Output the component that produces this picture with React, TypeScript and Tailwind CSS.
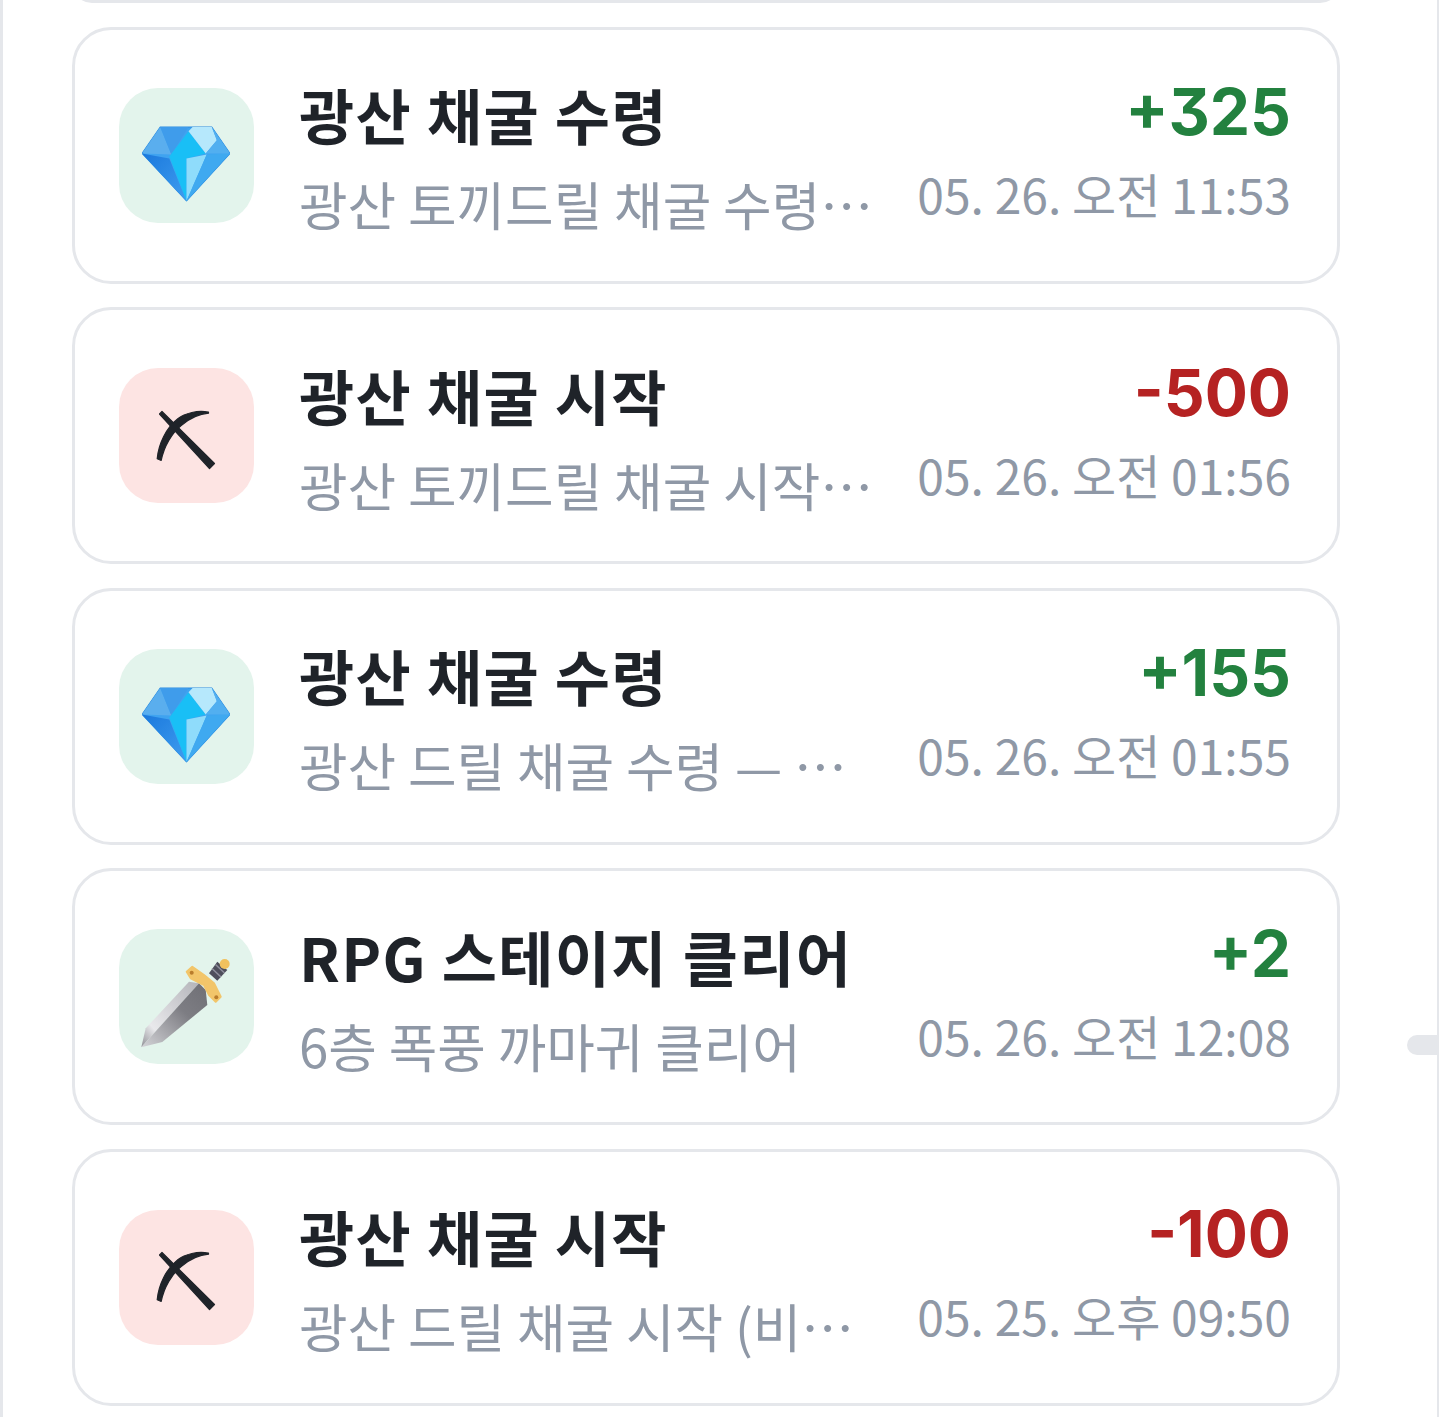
const KR = "font-['Noto_Sans_CJK_KR',sans-serif]";

interface Row {
    title: string;
    sub: string;
    amount: string;
    time: string;
    icon: 'gem' | 'pick' | 'dagger';
}

const rows: Row[] = [
    { title: '광산 채굴 수령', sub: '광산 토끼드릴 채굴 수령 — 비용 500', amount: '+325', time: '05. 26. 오전 11:53', icon: 'gem' },
    { title: '광산 채굴 시작', sub: '광산 토끼드릴 채굴 시작 (비용 500)', amount: '-500', time: '05. 26. 오전 01:56', icon: 'pick' },
    { title: '광산 채굴 수령', sub: '광산 드릴 채굴 수령 — 비용 100 다이아', amount: '+155', time: '05. 26. 오전 01:55', icon: 'gem' },
    { title: 'RPG 스테이지 클리어', sub: '6층 폭풍 까마귀 클리어', amount: '+2', time: '05. 26. 오전 12:08', icon: 'dagger' },
    { title: '광산 채굴 시작', sub: '광산 드릴 채굴 시작 (비용 100 다이아)', amount: '-100', time: '05. 25. 오후 09:50', icon: 'pick' },
];

function Gem({ id }: { id: string }) {
    return (
        <svg viewBox="0 0 87 75" className="w-[88px] h-[76px] mt-[17px] mr-[2px]">
            <defs>
                <linearGradient id={id} x1="0" y1="0" x2="1" y2="1">
                    <stop offset="0" stopColor="#1a78dc" />
                    <stop offset="1" stopColor="#3f9df0" />
                </linearGradient>
            </defs>
            <path d="M18 1H69L87 27L44 74L0 27Z" fill="#3fa3f0" stroke="#2a8ae0" strokeWidth="1" strokeLinejoin="round" />
            <path d="M18 1L29 28L0 27Z" fill="#5aaeee" />
            <path d="M18 1H46L29 28Z" fill="#3f9ceb" />
            <path d="M0 27L27 32L44 74Z" fill={`url(#${id})`} />
            <path d="M46 5L63 27L44 32V74L27 30Z" fill="#19bff6" />
            <path d="M44 32L64 28L44 74Z" fill="#8fdcfb" />
            <path d="M64 28L87 27L44 74Z" fill="#3fa9f0" />
            <path d="M46 5L50 1H69L74 14L63 27Z" fill="#b6e8fc" />
            <path d="M69 1L87 27L63 27L74 14Z" fill="#52aff0" />
        </svg>
    );
}

function Pick() {
    return (
        <svg viewBox="0 0 60 60" className="w-[60px] h-[60px] mr-[2px] overflow-visible" fill="#1f2329" stroke="#1f2329" strokeWidth="1.2" strokeLinejoin="round">
            <path d="M3.5 8L6 5.5L58.5 57.5L53.5 62.5Z" />
            <path d="M1.2 52.8C2.5 38 10 22 21.8 12.8C29 7 42 4 52.5 6.2L52.5 7.2C42 8 33 13 25.2 19.5C16 27 8 40 5.2 54.5Z" />
        </svg>
    );
}

function Dagger() {
    return (
        <svg viewBox="0 0 90 90" className="w-[90px] h-[90px] mt-[15px] mr-[1px]">
            <defs>
                <linearGradient id="bladeTop" x1="0" y1="1" x2="1" y2="0">
                    <stop offset="0" stopColor="#8f8f95" />
                    <stop offset="0.25" stopColor="#e9e9ec" />
                    <stop offset="1" stopColor="#b4b4b9" />
                </linearGradient>
                <linearGradient id="bladeLow" x1="0" y1="1" x2="1" y2="0">
                    <stop offset="0" stopColor="#d4d4d8" />
                    <stop offset="0.6" stopColor="#7d7d83" />
                    <stop offset="1" stopColor="#6f6f75" />
                </linearGradient>
            </defs>
            <path d="M0.3 88.3L4.7 69.3L48 22.7L58 24.3Z" fill="url(#bladeTop)" />
            <path d="M0.3 88.3L58 24.3L64.7 31L66.3 46L21.3 83Z" fill="url(#bladeLow)" />
            <path d="M68 14.3L76.3 2.7L86.3 11L76.3 21.7Z" fill="#4e4e5c" />
            <path d="M71 9.5L80 18M74.5 5.5L83.5 14" stroke="#8e8e9c" strokeWidth="1.5" />
            <circle cx="83.7" cy="5" r="5" fill="#f1c15e" />
            <path d="M45.7 12.7L51.3 7.7L63 16L73 24.3L79.7 37.7L74.7 42.7L68 36L63 26L49.7 19.3Z" fill="#f2c56a" stroke="#f2c56a" strokeWidth="2" strokeLinejoin="round" />
            <circle cx="50.7" cy="13.7" r="2" fill="#b97c2c" />
            <circle cx="75.3" cy="38.3" r="2" fill="#b97c2c" />
        </svg>
    );
}

function Card({ row, index }: { row: Row; index: number }) {
    const plus = row.amount.startsWith('+');
    return (
        <div className="h-[257px] bg-white border-[3px] border-[#e5e7eb] rounded-[39px] flex items-center pl-[44px] pr-[46px]">
            <div className={`w-[135px] h-[135px] shrink-0 rounded-[39px] flex items-center justify-center ${plus ? 'bg-[#e3f4ec]' : 'bg-[#fde4e3]'}`}>
                {row.icon === 'gem' && <Gem id={`gemShade${index}`} />}
                {row.icon === 'pick' && <Pick />}
                {row.icon === 'dagger' && <Dagger />}
            </div>
            <div className="ml-[45px] flex-1 min-w-0 pt-[7px] flex flex-col gap-[9px]">
                <div className={`${KR} text-[60px] font-bold text-[#1f2329] leading-[80px] tracking-[1.3px]`}>{row.title}</div>
                <div className={`${KR} truncate text-[52.8px] leading-[80px] text-[#8f98a6] font-normal`}>{row.sub}</div>
            </div>
            <div className="ml-[42px] shrink-0 pb-[10px] flex flex-col items-end gap-[6px]">
                <div className={`font-['Inter',sans-serif] [font-feature-settings:'cv09'] text-[64px] font-bold leading-[80px] ${plus ? 'text-[#23813f]' : 'text-[#b52222]'}`}>{row.amount}</div>
                <div className={`${KR} text-[48px] leading-[70px] text-[#8f98a6] font-normal`}>{row.time}</div>
            </div>
        </div>
    );
}

export default function App() {
    return (
        <div className="relative w-[1439px] h-[1417px] overflow-hidden bg-white border-l-[3px] border-r-2 border-[#e5e7eb] pl-[69px] pr-[97px]">
            <div className="-mt-[37px] h-[40px] border-[3px] border-[#e5e7eb] rounded-[39px]" />
            <div className="mt-[23.9px] flex flex-col gap-[23.5px]">
                {rows.map((row, i) => (
                    <Card key={i} row={row} index={i} />
                ))}
            </div>
            <div className="absolute right-0 top-[1035px] w-[30px] h-[20px] rounded-l-full bg-[#e5e7eb]" />
        </div>
    );
}
